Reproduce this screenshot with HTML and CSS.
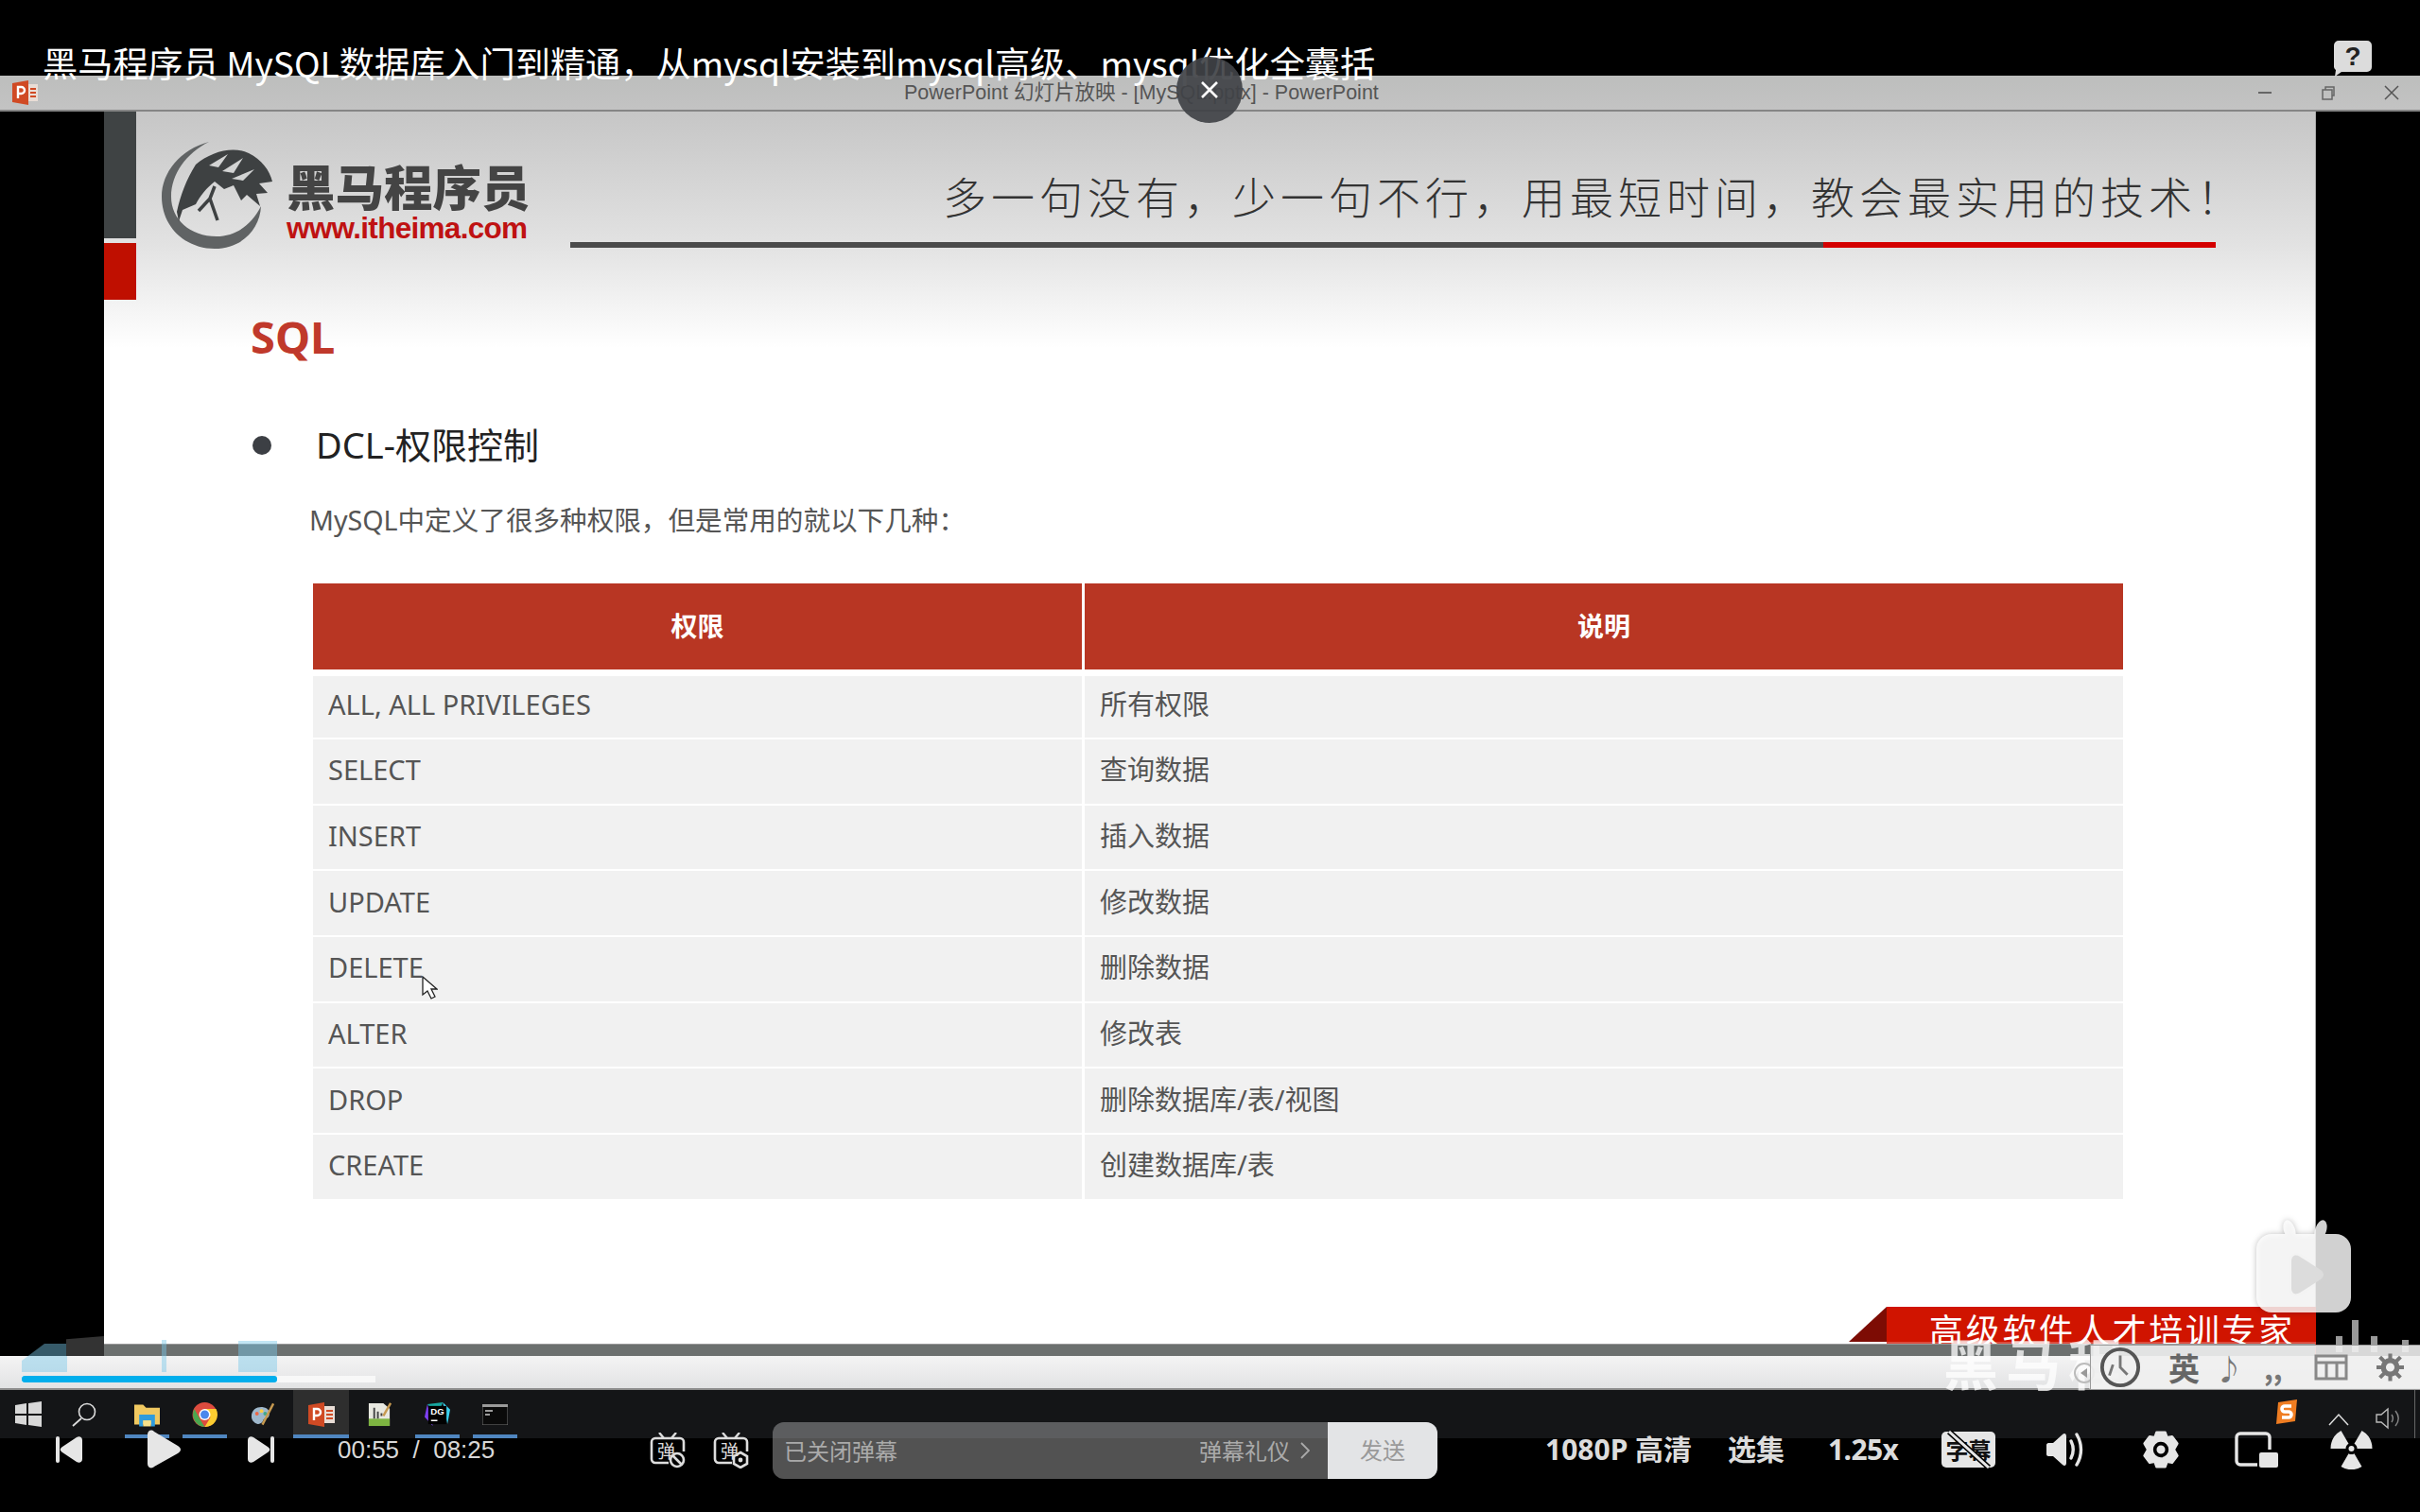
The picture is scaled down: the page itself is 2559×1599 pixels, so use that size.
FILE: index.html
```html
<!DOCTYPE html>
<html lang="zh">
<head>
<meta charset="utf-8">
<title>黑马程序员 MySQL</title>
<link rel="stylesheet" href="styles.css">
</head>
<body>
<div class="screen">
  <div class="top-gap"></div>
  <div class="pptbar">
    <svg class="ppt-logo" viewBox="0 0 28 26"><path fill="#d04a24" d="M0 3 17 0v26L0 23z"/><path fill="#e9ddd6" d="M17 4h10v18H17z"/><path fill="#d04a24" d="M19 8h6v2h-6zM19 12h6v2h-6zM19 16h6v2h-6z"/><path fill="none" stroke="#fff" stroke-width="2.4" d="M6 19V7h3.5a3 3 0 0 1 0 7H6"/></svg>
    <span class="ppt-title">PowerPoint 幻灯片放映 - [MySQL.pptx] - PowerPoint</span>
    <div class="win-btns">
      <svg viewBox="0 0 16 16"><path d="M1 8h14" stroke="#666" stroke-width="2"/></svg>
      <svg viewBox="0 0 16 16"><path d="M2 5h10v10H2zM5 5V2h9v9h-2" fill="none" stroke="#666" stroke-width="1.5"/></svg>
      <svg viewBox="0 0 16 16"><path d="M1 1l14 14M15 1 1 15" stroke="#555" stroke-width="1.5"/></svg>
    </div>
  </div>
  <div class="slide-row">
    <main class="slide">
      <header class="slide-head">
        <div class="stripes"><div class="stripe-dark"></div><div class="stripe-red"></div></div>
        <div class="logo">
          <svg class="logo-mark" viewBox="0 0 120 114">
            <path fill="#606364" d="M50 0C20 8 0 32 0 58c0 32 25 55 56 55 29 0 48-21 49-45-10 20-27 32-47 32-28 0-48-18-48-42C10 34 26 12 50 0z"/>
            <path fill="#3e4142" d="M36 24C52 10 76 4 92 12c14 7 22 18 25 30l-14 2 9 10-12 1 4 13-14-12-6 6-8-16-10 4-10-8c-8 6-16 16-20 24L22 72l-4 12-2-10c4-18 10-34 20-50z"/>
            <path fill="#d2d3d3" d="M50 25 70 13 60 27zM64 31 86 17 76 33zM74 39 98 29 86 41z"/>
            <path fill="none" stroke="#3e4142" stroke-width="3.500" d="M56 47 51 60 39 73M51 60 59 83"/>
          </svg>
          <div class="logo-text"><div class="logo-cn">黑马程序员</div><div class="logo-url">www.itheima.com</div></div>
        </div>
        <div class="slogan-wrap">
          <div class="slogan">多一句没有，少一句不行，用最短时间，教会最实用的技术！</div>
          <div class="rule"><div class="rule-dark"></div><div class="rule-red"></div></div>
        </div>
      </header>
      <section class="content">
        <h1 class="sql">SQL</h1>
        <h2 class="bullet"><span class="dot"></span>DCL-权限控制</h2>
        <p class="intro">MySQL中定义了很多种权限，但是常用的就以下几种：</p>
        <div class="table">
          <div class="th">权限</div><div class="th">说明</div>
          <div class="td">ALL, ALL PRIVILEGES</div><div class="td">所有权限</div>
          <div class="td">SELECT</div><div class="td">查询数据</div>
          <div class="td">INSERT</div><div class="td">插入数据</div>
          <div class="td">UPDATE</div><div class="td">修改数据</div>
          <div class="td">DELETE</div><div class="td">删除数据</div>
          <div class="td">ALTER</div><div class="td">修改表</div>
          <div class="td">DROP</div><div class="td">删除数据库/表/视图</div>
          <div class="td">CREATE</div><div class="td">创建数据库/表</div>
        </div>
      </section>
      <svg class="cursor" viewBox="0 0 17 25"><path d="M1 1v19l5-4 4 8 4-2-4-8h6z" fill="#fff" stroke="#222" stroke-width="1.3"/></svg>
      <div class="banner"><span class="banner-fold"></span><span class="banner-text">高级软件人才培训专家</span></div>
      <div class="slide-foot"></div>
    </main>
  </div>
  <div class="band"></div>
  <div class="taskbar">
    <div class="tb-cell tb-first"><svg class="ic-win" viewBox="0 0 28 27"><path fill="#d8d8d8" d="M0 4 12 2v11H0zM14 2 28 0v13H14zM0 15h12v10L0 23zM14 15h14v12l-14-2z"/></svg></div>
    <div class="tb-cell tb-second"><svg class="ic-search" viewBox="0 0 27 26"><circle cx="16" cy="10" r="8.500" fill="none" stroke="#ddd" stroke-width="1.600"/><path d="M10 17 1 25" stroke="#ddd" stroke-width="1.800"/></svg></div>
    <div class="tb-cell run"><svg class="ic-app" viewBox="0 0 26 24"><path fill="#f0c860" d="M0 2h9l3 3h14v17H0z"/><path fill="#2f9bdc" d="M5 12h16v12h-4v-6H9v6H5z"/><path fill="#f7e08a" d="M9 18h8v6H9z"/></svg></div>
    <div class="tb-cell run"><svg class="ic-app" viewBox="0 0 26 26"><circle cx="13" cy="13" r="13" fill="#dd4b3e"/><path fill="#4aa74f" d="M2 7 8 18l5 8a13 13 0 0 1-11-19z"/><path fill="#fbcc30" d="M13 7h12a13 13 0 0 1-12 19l6-10z"/><circle cx="13" cy="13" r="6" fill="#fff"/><circle cx="13" cy="13" r="4.500" fill="#4b87ed"/></svg></div>
    <div class="tb-cell"><svg class="ic-app" viewBox="0 0 28 26"><path fill="#9fb8cc" d="M2 15C2 7 9 4 15 5c6 1 8 6 6 10-2 3-5 1-6 4-1 3-4 5-7 4-3-1-6-4-6-8z"/><circle cx="8" cy="12" r="2" fill="#e64"/><circle cx="13" cy="9" r="2" fill="#fc4"/><circle cx="17" cy="12" r="2" fill="#4a8"/><path d="M26 1 14 24" stroke="#c79a50" stroke-width="2.500"/></svg></div>
    <div class="tb-cell run active"><svg class="ic-ppt" viewBox="0 0 28 26"><path fill="#d04a24" d="M0 3 17 0v26L0 23z"/><path fill="#e9ddd6" d="M17 4h11v18H17z"/><path fill="#d04a24" d="M19 8h7v2h-7zM19 12h7v2h-7zM19 16h7v2h-7z"/><path fill="none" stroke="#fff" stroke-width="2.400" d="M6 19V7h3.500a3 3 0 0 1 0 7H6"/></svg></div>
    <div class="tb-cell"><svg class="ic-app" viewBox="0 0 26 27"><path fill="#e8e8e0" d="M1 1h16l7 6v19H1z"/><path fill="#7db441" d="M1 18h23v8H1z"/><path stroke="#444" stroke-width="2" d="M7 6v12M11 10v8M15 12v3"/><path stroke="#c79a50" stroke-width="2.500" d="M25 1 17 15"/></svg></div>
    <div class="tb-cell run"><svg class="ic-app" viewBox="0 0 28 27"><path fill="#17a6a0" d="M3 2 20 0l-6 14z"/><path fill="#7e3ff2" d="M0 16 3 2l6 24z"/><path fill="#3bd1ef" d="M20 0l8 8-3 16z"/><path fill="#000" d="M4 4h20v20H4z"/><text class="tb-dg" x="14" y="14" text-anchor="middle">DG</text><path d="M7 20h7" stroke="#fff" stroke-width="1.600"/></svg></div>
    <div class="tb-cell run"><svg class="ic-app ic-term" viewBox="0 0 27 22"><rect width="27" height="22" fill="#0a0a0a" stroke="#777"/><rect width="27" height="3" fill="#9a9a9a"/><path d="M3 7h8M3 11h5" stroke="#ccc" stroke-width="1.500"/></svg></div>
    <div class="tray">
      <svg class="tray-s" viewBox="0 0 26 26"><path fill="#ef7d22" d="M4 3 24 0l-2 23-20 3z"/><path fill="none" stroke="#fff" stroke-width="3.600" d="M18 7h-7a2.600 2.600 0 0 0 0 6h4a2.600 2.600 0 0 1 0 6H8"/></svg>
      <svg class="tray-up" viewBox="0 0 22 14"><path d="M1 13 11 2l10 11" fill="none" stroke="#ddd" stroke-width="1.500"/></svg>
      <svg class="tray-vol" viewBox="0 0 28 24"><path d="M1 8h5l7-6v20l-7-6H1z" fill="none" stroke="#bbb" stroke-width="1.400"/><path d="M17 8c2 3 2 5 0 8M21 4c4 5 4 11 0 16" fill="none" stroke="#888" stroke-width="1.400"/></svg>
      <span class="tray-line"></span>
    </div>
  </div>
  <div class="bottom-gap"></div>

  <div class="video-title">黑马程序员 MySQL数据库入门到精通，从mysql安装到mysql高级、mysql优化全囊括</div>
  <div class="close-btn"><svg viewBox="0 0 20 20"><path d="M2 2l16 16M18 2 2 18" stroke="#fff" stroke-width="2.600"/></svg></div>
  <svg class="help" viewBox="0 0 40 38"><path fill="#dcdcdc" d="M5 0h30a5 5 0 0 1 5 5v23a5 5 0 0 1-5 5H8l-7 5 1-7a5 5 0 0 1-2-3V5a5 5 0 0 1 5-5z"/><text class="help-q" x="20" y="26" text-anchor="middle">?</text></svg>

  <div class="seek-ticks"><span class="tick-a"></span><span class="tick-b"></span><span class="tick-c"></span></div>
  <div class="seek-blob"></div>
  <div class="seek"><div class="seek-buffer"><div class="seek-fill"></div></div></div>

  <div class="ghost-bars"><span></span><span></span><span></span><span></span></div>
  <div class="watermark">黑马程</div>
  <svg class="tv-badge" viewBox="0 0 101 98"><g class="tv-body"><path fill="#fff" d="M16 15h68a16 16 0 0 1 16 16v51a16 16 0 0 1-16 16H16A16 16 0 0 1 0 82V31a16 16 0 0 1 16-16z"/><ellipse fill="#fff" cx="35" cy="11" rx="6" ry="11" transform="rotate(-18 35 11)"/><ellipse fill="#fff" cx="68" cy="11" rx="6" ry="11" transform="rotate(18 68 11)"/></g><path fill="#dcdcdc" d="M37 44c0-6 4-8 9-5l22 14c4 3 4 7 0 10L46 77c-5 3-9 1-9-5z"/></svg>
  <div class="sogou-ghost"><svg viewBox="0 0 24 24"><circle cx="12" cy="12" r="10" fill="none" stroke="#bbb" stroke-width="2"/><path d="M15 7 8 12l7 5z" fill="#999"/></svg></div>
  <div class="sogou">
    <svg class="sg-clock" viewBox="0 0 46 46"><circle cx="23" cy="23" r="20" fill="none" stroke="#555" stroke-width="4"/><path d="M23 10v13l8 8M15 20l-4 12" stroke="#777" stroke-width="3" fill="none"/></svg>
    <span class="sg-en">英</span>
    <span class="sg-mark sg-note">♪</span>
    <span class="sg-mark sg-comma">,,</span>
    <svg class="sg-box" viewBox="0 0 34 30"><path d="M1 3h32v24H1zM1 10h32M12 10v17M23 10v17" fill="none" stroke="#888" stroke-width="3"/></svg>
    <svg class="sg-gear" viewBox="0 0 32 32"><circle cx="16" cy="16" r="8" fill="none" stroke="#777" stroke-width="6"/><path d="M16 0v6M16 26v6M0 16h6M26 16h6M4 4l5 5M23 23l5 5M28 4l-5 5M9 23l-5 5" stroke="#777" stroke-width="4.500"/></svg>
  </div>

  <div class="controls">
    <div class="ctl-left">
      <svg class="ic-skip" viewBox="0 0 29 28"><rect x="0" y="0" width="4" height="28" rx="2" fill="#e6e6e6"/><path fill="#e6e6e6" d="M7 11 22 1c3-2 6 0 6 3v20c0 3-3 5-6 3L7 17c-3-2-3-4 0-6z"/></svg>
      <svg class="ic-play" viewBox="0 0 35 41"><path fill="#e6e6e6" d="M0 5c0-4 4-6 7-3l25 15c4 3 4 5 0 8L7 39c-3 3-7 1-7-3z"/></svg>
      <svg class="ic-skip" viewBox="0 0 29 28"><rect x="25" y="0" width="4" height="28" rx="2" fill="#e6e6e6"/><path fill="#e6e6e6" d="M22 11 7 1C4-1 1 1 1 4v20c0 3 3 5 6 3l15-10c3-2 3-4 0-6z"/></svg>
      <span class="time">00:55 &nbsp;/&nbsp; 08:25</span>
    </div>
    <div class="ctl-dm">
      <div class="dm-ic"><svg viewBox="0 0 38 38"><path d="M10 0l5 6M28 0l-5 6" stroke="#ddd" stroke-width="2.400"/><path d="M20 32H6a4 4 0 0 1-4-4V10a4 4 0 0 1 4-4h26a4 4 0 0 1 4 4v10" fill="none" stroke="#ddd" stroke-width="2.600"/><circle cx="29" cy="29" r="7" fill="none" stroke="#ddd" stroke-width="2.600"/><path d="M24 24l10 10" stroke="#ddd" stroke-width="2.600"/></svg><span class="dm-char">弹</span></div>
      <div class="dm-ic"><svg viewBox="0 0 38 38"><path d="M10 0l5 6M28 0l-5 6" stroke="#ddd" stroke-width="2.400"/><path d="M20 32H6a4 4 0 0 1-4-4V10a4 4 0 0 1 4-4h26a4 4 0 0 1 4 4v10" fill="none" stroke="#ddd" stroke-width="2.600"/><path d="M29 21l7 4v8l-7 4-7-4v-8z" fill="none" stroke="#ddd" stroke-width="2.600"/><circle cx="29" cy="29" r="2.400" fill="#ddd"/></svg><span class="dm-char">弹</span></div>
      <div class="dm-input">
        <span class="dm-closed">已关闭弹幕</span>
        <span class="dm-rule">弹幕礼仪<svg viewBox="0 0 10 18"><path d="M1 1l8 8-8 8" fill="none" stroke="#aaa" stroke-width="1.800"/></svg></span>
        <span class="dm-send">发送</span>
      </div>
    </div>
    <div class="ctl-right">
      <span class="ctl-txt q">1080P 高清</span>
      <span class="ctl-txt ep">选集</span>
      <span class="ctl-txt sp">1.25x</span>
      <div class="ic-sub"><span>字幕</span><svg viewBox="0 0 57 40"><path d="M8 1 50 39" stroke="#000" stroke-width="6"/><path d="M8 1 50 39" stroke="#e6e6e6" stroke-width="3"/></svg></div>
      <svg class="ic-vol" viewBox="0 0 40 40"><path fill="#e6e6e6" d="M0 15c0-1 1-2 2-2h5L17 4c2-2 4-1 4 2v28c0 3-2 4-4 2L7 27H2c-1 0-2-1-2-2z"/><path d="M26 11c3 6 3 12 0 18M32 4c6 10 6 22 0 32" fill="none" stroke="#e6e6e6" stroke-width="3.400" stroke-linecap="round"/></svg>
      <svg class="ic-gear" viewBox="-2 -2 48 44"><path fill="#e6e6e6" stroke="#e6e6e6" stroke-width="3" stroke-linejoin="round" d="M17 0h10l2 6 6-1 6 8-4 7 4 7-6 8-6-1-2 6H17l-2-6-6 1-6-8 4-7-4-7 6-8 6 1z"/><circle cx="22" cy="20" r="7" fill="none" stroke="#000" stroke-width="4"/></svg>
      <svg class="ic-pip" viewBox="0 0 46 38"><path d="M24 35H6a4 4 0 0 1-4-4V6a4 4 0 0 1 4-4h27a4 4 0 0 1 4 4v13" fill="none" stroke="#e6e6e6" stroke-width="3.400"/><rect x="26" y="22" width="20" height="16" rx="2" fill="#e6e6e6"/></svg>
      <svg class="ic-rad" viewBox="0 2 45 42"><circle cx="22.500" cy="22" r="3" fill="#e6e6e6"/><path fill="#e6e6e6" d="M25.500 16.800 33.500 2.950A22 22 0 0 1 44.500 22H28.500A6 6 0 0 0 25.500 16.800zM19.500 16.800 11.500 2.950A22 22 0 0 0 .5 22H16.500A6 6 0 0 1 19.500 16.800zM19.500 27.200 11.500 41.050A22 22 0 0 0 33.500 41.050L25.500 27.200A6 6 0 0 1 19.500 27.200z"/></svg>
    </div>
  </div>
</div>
</body>
</html>
```

FILE: styles.css
```css
* { box-sizing: border-box; }
html, body { margin: 0; padding: 0; background: #000; }
body { font-family: "Noto Sans", "Noto Sans CJK SC", sans-serif; overflow: hidden; }
.screen { position: relative; width: 2559px; height: 1599px; display: flex; flex-direction: column; background: #000; overflow: hidden; }

.top-gap { height: 80px; flex: none; }
.pptbar { height: 38px; flex: none; display: flex; align-items: center; background: linear-gradient(#bdbebd, #c3c3c3); border-bottom: 2px solid #858585; padding: 0 22px 0 13px; }
.ppt-logo { width: 28px; height: 26px; flex: none; }
.ppt-title { margin: -5px 0 0 915px; font: 21.500px "Liberation Sans", "Noto Sans CJK SC", sans-serif; color: #555; white-space: nowrap; }
.win-btns { margin-left: auto; display: flex; gap: 51px; }
.win-btns svg { width: 16px; height: 16px; }

.slide-row { height: 1316px; flex: none; padding: 0 110px; }
.slide { position: relative; width: 2339px; height: 100%; display: flex; flex-direction: column; background: linear-gradient(#c6c6c6 0, #e2e2e2 140px, #f2f2f2 200px, #fff 250px); border-right: 1px solid #aaa; }
.slide-head { height: 199px; flex: none; display: flex; }
.stripes { width: 34px; flex: none; }
.stripe-dark { height: 134px; background: #3f4344; }
.stripe-red { height: 60px; margin-top: 5px; background: #bf0f00; }
.logo { width: 459px; flex: none; padding: 32px 0 0 27px; display: flex; gap: 12px; align-items: flex-start; }
.logo-mark { width: 120px; height: 114px; flex: none; }
.logo-text { margin-top: 16px; }
.logo-cn { font: 900 51.500px/59px "Noto Sans CJK SC", sans-serif; color: #444; white-space: nowrap; }
.logo-url { font: 700 31.500px/30px "Liberation Sans", sans-serif; letter-spacing: -.7px; color: #bf1212; white-space: nowrap; margin-top: 1px; }
.slogan-wrap { width: 1740px; flex: none; display: flex; flex-direction: column; }
.slogan { height: 138px; padding: 58px 0 0 394px; font: 300 46px/60px "Noto Sans CJK SC", sans-serif; letter-spacing: 5px; color: #333; white-space: nowrap; }
.rule { height: 6px; display: flex; }
.rule-dark { width: 1325px; background: #4b4b4b; }
.rule-red { width: 415px; background: #d40000; }

.content { padding: 9px 0 0 155px; }
.sql { margin: 0; font: 700 47px/60px "Noto Sans", sans-serif; color: #c0392b; }
.bullet { margin: 58px 0 0 0; display: flex; align-items: center; font: 400 38px/52px "Noto Sans", "Noto Sans CJK SC", sans-serif; color: #222; }
.dot { width: 20px; height: 20px; border-radius: 50%; background: #3c3f44; margin: 2px 47px 0 2px; }
.intro { margin: 33px 0 0 62px; font: 400 28.600px/42px "Noto Sans", "Noto Sans CJK SC", sans-serif; color: #555; white-space: nowrap; }
.table { margin: 46px 0 0 66px; width: 1914px; display: grid; grid-template-columns: 813px 1098px; grid-template-rows: 96px 65px; grid-auto-rows: 67.700px; column-gap: 3px; row-gap: 2px; }
.th { height: 91px; background: #b83623; color: #fff; font: 700 28px/89px "Noto Sans CJK SC", sans-serif; text-align: center; }
.td { display: flex; align-items: center; background: #f1f1f1; padding: 0 0 3px 16px; font: 400 29px/40px "Noto Sans", "Noto Sans CJK SC", sans-serif; color: #555; white-space: nowrap; }
.th + .th + .td, .th + .th + .td + .td { padding-bottom: 5px; }

.cursor { position: absolute; left: 336px; top: 914px; width: 17px; height: 25px; }
.banner { position: absolute; left: 1845px; top: 1264px; width: 494px; height: 52px; }
.banner-fold { position: absolute; left: 0; top: 0; width: 45px; height: 37px; background: #7d0c04; clip-path: polygon(40px 0, 45px 37px, 0 37px); }
.banner-text { position: absolute; left: 40px; top: 0; width: 454px; height: 52px; background: linear-gradient(#d01400 0, #d01400 37px, #dd4a3c 37px); padding: 0 0 0 45px; font: 400 36px/46px "Noto Sans CJK SC", sans-serif; letter-spacing: 2.700px; color: #fff; white-space: nowrap; }
.slide-foot { position: absolute; left: 0; right: 0; bottom: 0; height: 13px; background: #6c706f; border-top: 1px solid #999; }

.band { height: 36px; flex: none; background: linear-gradient(#f4f4f4, #e2e3e4); border-bottom: 2px solid #8c8c8c; }
.taskbar { height: 51px; flex: none; display: flex; background: #141517; }
.tb-cell { position: relative; width: 61px; height: 51px; flex: none; display: flex; align-items: center; justify-content: center; }
.tb-first { width: 59px; }
.tb-second { width: 60px; margin-right: 6px; }
.run::after { content: ""; position: absolute; left: 7px; right: 7px; bottom: 0; height: 4px; background: #4f86c0; }
.active { width: 59px; margin: 0 2px; background: #2e2e2e; }
.active::after { left: 0; right: 0; }
.ic-win { width: 28px; height: 27px; }
.ic-search { width: 27px; height: 26px; }
.ic-app { width: 27px; height: 26px; }
.ic-term { height: 22px; }
.ic-ppt { width: 28px; height: 26px; }
.tb-dg { font: 700 10px "Liberation Sans", sans-serif; fill: #fff; }
.tray { margin-left: auto; display: flex; align-items: flex-start; }
.tray-s { width: 26px; height: 26px; margin-top: 10px; margin-right: 31px; }
.tray-up { width: 22px; height: 14px; margin-top: 24px; margin-right: 28px; }
.tray-vol { width: 28px; height: 24px; margin-top: 18px; margin-right: 13px; }
.tray-line { width: 1px; height: 51px; margin-right: 5px; background: #666; }
.bottom-gap { flex: 1; }

.video-title { position: absolute; left: 45px; top: 41px; font: 400 37.200px/50px "Noto Sans CJK SC", sans-serif; color: #fff; white-space: nowrap; }
.close-btn { position: absolute; left: 1244px; top: 60px; width: 70px; height: 70px; border-radius: 50%; background: rgba(64, 66, 70, .92); display: flex; align-items: center; justify-content: center; }
.close-btn svg { width: 20px; height: 20px; }
.help { position: absolute; left: 2468px; top: 43px; width: 40px; height: 38px; }
.help-q { font: 700 28px "Liberation Sans", sans-serif; fill: #222; }

.seek-ticks { position: absolute; left: 23px; top: 1417px; width: 270px; height: 34px; }
.seek-ticks span { position: absolute; bottom: 0; background: rgba(120, 200, 232, .45); }
.tick-a { left: 0; width: 48px; height: 30px; clip-path: polygon(0 60%, 50% 0, 100% 0, 100% 100%, 0 100%); }
.tick-b { left: 148px; width: 5px; height: 34px; }
.tick-c { left: 229px; width: 41px; height: 33px; }
.seek-blob { position: absolute; left: 70px; top: 1413px; width: 40px; height: 21px; background: #333; clip-path: polygon(0 15%, 100% 0, 100% 100%, 0 100%); }
.seek { position: absolute; left: 23px; top: 1455px; width: 2536px; height: 7px; }
.seek-buffer { width: 374px; height: 7px; background: #f8f8f8; }
.seek-fill { width: 270px; height: 7px; border-radius: 3px; background: #00aeec; }

.ghost-bars { position: absolute; left: 2470px; top: 1396px; width: 85px; height: 34px; display: flex; align-items: flex-end; }
.ghost-bars span { width: 7px; height: 17px; margin-right: 10px; background: rgba(255, 255, 255, .6); }
.ghost-bars span:nth-child(2) { height: 34px; margin-right: 13px; }
.ghost-bars span:nth-child(3) { margin-right: 26px; }
.ghost-bars span:nth-child(4) { height: 13px; margin-right: 0; }
.watermark { position: absolute; left: 2055px; top: 1405px; font: 700 58px/70px "Noto Sans CJK SC", sans-serif; letter-spacing: 8px; color: rgba(255, 255, 255, .75); white-space: nowrap; }
.tv-badge { position: absolute; left: 2386px; top: 1290px; width: 101px; height: 98px; filter: drop-shadow(0 0 3px rgba(0, 0, 0, .3)); }
.tv-body { opacity: .82; }
.sogou-ghost { position: absolute; left: 2192px; top: 1440px; width: 24px; height: 24px; }
.sogou-ghost svg { display: block; width: 24px; height: 24px; }
.sogou { position: absolute; left: 2210px; top: 1422px; width: 349px; height: 48px; background: rgba(240, 240, 240, .9); border: 1px solid #999; border-width: 1px 0 1px 1px; display: flex; align-items: center; padding-left: 9px; }
.sg-clock { width: 44px; height: 44px; flex: none; margin-right: 29px; }
.sg-en { font: 700 33px/46px "Noto Sans CJK SC", sans-serif; color: #666; margin-right: 16px; }
.sg-mark { font: 700 30px/46px "Noto Sans CJK SC", sans-serif; color: #777; }
.sg-note { width: 52px; }
.sg-comma { width: 53px; }
.sg-box { width: 36px; height: 30px; flex: none; margin-right: 30px; }
.sg-gear { width: 29px; height: 30px; flex: none; }

.controls { position: absolute; left: 0; top: 1504px; width: 2559px; height: 60px; display: flex; align-items: center; }
.ctl-left { width: 687px; flex: none; padding: 0 0 3px 59px; display: flex; align-items: center; }
.ic-skip { width: 29px; height: 28px; flex: none; }
.ic-play { width: 35px; height: 41px; flex: none; margin: 0 70px 0 68px; }
.time { margin-left: 67px; font: 400 26px/36px "Liberation Sans", sans-serif; color: #d8d8d8; white-space: nowrap; }
.ctl-dm { width: 947px; flex: none; display: flex; align-items: center; }
.dm-ic { position: relative; width: 38px; height: 38px; margin-right: 29px; }
.dm-ic + .dm-ic { margin-right: 25px; }
.dm-ic svg { display: block; width: 38px; height: 38px; }
.dm-char { position: absolute; left: 8px; top: 8px; font: 400 19px/21px "Noto Sans CJK SC", sans-serif; color: #ddd; }
.dm-input { width: 703px; height: 60px; border-radius: 12px; overflow: hidden; background: linear-gradient(#5c5d5f 0, #5c5d5f 17px, #525252 17px); display: flex; align-items: center; padding-left: 12px; font: 400 24px/58px "Noto Sans CJK SC", sans-serif; color: #aaa; }
.dm-closed { white-space: nowrap; }
.dm-rule { margin-left: auto; display: flex; align-items: center; gap: 11px; padding-right: 19px; white-space: nowrap; }
.dm-rule svg { width: 10px; height: 18px; }
.dm-send { width: 116px; height: 60px; flex: none; text-align: center; background: #e3e4e6; color: #999; }
.ctl-right { flex: 1; display: flex; align-items: center; padding-bottom: 3px; }
.ctl-txt { font: 700 30px/40px "Noto Sans", "Noto Sans CJK SC", sans-serif; color: #dcdcdc; white-space: nowrap; }
.q { width: 193px; }
.ep { width: 106px; }
.sp { width: 120px; letter-spacing: -.6px; }
.ic-sub { position: relative; width: 57px; height: 38px; flex: none; background: #e6e6e6; border-radius: 5px; margin-right: 54px; text-align: center; font: 700 24px/38px "Noto Sans CJK SC", sans-serif; color: #111; white-space: nowrap; }
.ic-sub svg { position: absolute; left: 0; top: -1px; width: 57px; height: 40px; }
.ic-vol { width: 40px; height: 40px; flex: none; margin-right: 59px; }
.ic-gear { width: 44px; height: 40px; flex: none; margin-right: 56px; }
.ic-pip { width: 46px; height: 38px; flex: none; margin-right: 55px; }
.ic-rad { width: 45px; height: 42px; flex: none; }
```
